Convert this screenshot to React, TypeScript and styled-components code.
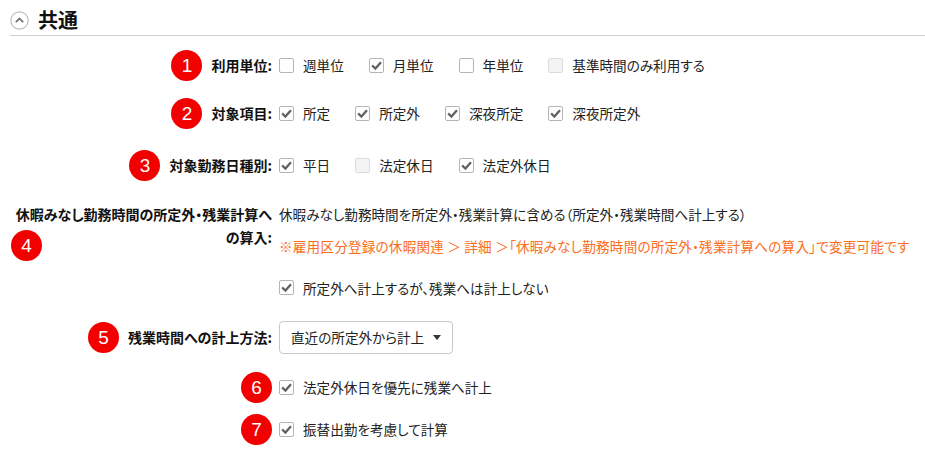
import React from 'react';
import styled, { createGlobalStyle } from 'styled-components';

const GlobalStyle = createGlobalStyle`
  html, body {
    margin: 0;
    padding: 0;
    background: #fff;
  }
  body {
    font-family: "Noto Sans CJK JP", "Noto Sans", sans-serif;
    font-size: 13.6px;
    font-feature-settings: "palt";
    color: #222;
  }
`;

type Opt = { label: string; checked?: boolean; disabled?: boolean };

const units: Opt[] = [
  { label: '週単位' },
  { label: '月単位', checked: true },
  { label: '年単位' },
  { label: '基準時間のみ利用する', disabled: true },
];

const targets: Opt[] = [
  { label: '所定', checked: true },
  { label: '所定外', checked: true },
  { label: '深夜所定', checked: true },
  { label: '深夜所定外', checked: true },
];

const dayKinds: Opt[] = [
  { label: '平日', checked: true },
  { label: '法定休日', disabled: true },
  { label: '法定外休日', checked: true },
];

const CheckBox: React.FC<{ checked?: boolean; disabled?: boolean }> = ({ checked, disabled }) => (
  <Box $disabled={disabled}>
    {checked && (
      <svg width="13" height="13" viewBox="0 0 13 13">
        <path d="M3 7.2 L5.4 9.6 L10.2 4.2" fill="none" stroke="#616161" strokeWidth="2.3" strokeLinecap="square" />
      </svg>
    )}
  </Box>
);

const Check: React.FC<Opt> = ({ label, checked, disabled }) => (
  <CheckItem>
    <CheckBox checked={checked} disabled={disabled} />
    <span>{label}</span>
  </CheckItem>
);

const CheckGroup: React.FC<{ items: Opt[] }> = ({ items }) => (
  <Group>
    {items.map((o) => (
      <Check key={o.label} {...o} />
    ))}
  </Group>
);

export default function App() {
  return (
    <Page>
      <GlobalStyle />
      <Header>
        <svg width="19" height="19" viewBox="0 0 19 19">
          <circle cx="9.5" cy="9.5" r="8.7" fill="#fff" stroke="#bdbdbd" strokeWidth="1.2" />
          <path d="M5.8 11.2 L9.5 7.5 L13.2 11.2" fill="none" stroke="#777" strokeWidth="1.8" />
        </svg>
        <Title>共通</Title>
      </Header>

      <Form>
        <Row $pt={12.5}>
          <Label>
            <Badge>1</Badge>
            <LabelText>利用単位:</LabelText>
          </Label>
          <CheckGroup items={units} />
        </Row>

        <Row $pt={15}>
          <Label>
            <Badge>2</Badge>
            <LabelText>対象項目:</LabelText>
          </Label>
          <CheckGroup items={targets} />
        </Row>

        <Row $pt={19}>
          <Label>
            <Badge>3</Badge>
            <LabelText>対象勤務日種別:</LabelText>
          </Label>
          <CheckGroup items={dayKinds} />
        </Row>

        <Row $pt={21} $top>
          <Label $wrap>
            <FloatBadge>4</FloatBadge>
            <LabelText>休暇みなし勤務時間の所定外・残業計算への算入:</LabelText>
          </Label>
          <Value>
            <Line>休暇みなし勤務時間を所定外・残業計算に含める（所定外・残業時間へ計上する）</Line>
            <Note>※雇用区分登録の休暇関連 ＞ 詳細 ＞「休暇みなし勤務時間の所定外・残業計算への算入」で変更可能です</Note>
            <SubCheck>
              <Check label="所定外へ計上するが、残業へは計上しない" checked />
            </SubCheck>
          </Value>
        </Row>

        <Row $pt={22.5}>
          <Label>
            <Badge>5</Badge>
            <LabelText>残業時間への計上方法:</LabelText>
          </Label>
          <Select>
            <span>直近の所定外から計上</span>
            <Caret />
          </Select>
        </Row>

        <Row $pt={17}>
          <Label>
            <Badge>6</Badge>
          </Label>
          <Check label="法定外休日を優先に残業へ計上" checked />
        </Row>

        <Row $pt={9}>
          <Label>
            <Badge>7</Badge>
          </Label>
          <Check label="振替出勤を考慮して計算" checked />
        </Row>
      </Form>
    </Page>
  );
}

const Page = styled.div`
  width: 925px;
  padding-left: 10px;
  box-sizing: border-box;
`;

const Header = styled.div`
  display: flex;
  align-items: center;
  gap: 9px;
  height: 30px;
  padding-top: 5px;
  border-bottom: 1px solid #cfcfcf;
`;

const Title = styled.h2`
  margin: 0;
  font-size: 20px;
  font-weight: 700;
  color: #111;
  line-height: 24px;
`;

const Form = styled.div`
  display: flex;
  flex-direction: column;
  margin-left: -10px;
`;

const Row = styled.div<{ $pt: number; $top?: boolean }>`
  display: grid;
  grid-template-columns: 272px 1fr;
  column-gap: 7px;
  align-items: ${(p) => (p.$top ? 'start' : 'center')};
  padding-top: ${(p) => p.$pt}px;
  min-height: 33px;
`;

const Label = styled.div<{ $wrap?: boolean }>`
  position: relative;
  display: flex;
  align-items: center;
  justify-content: flex-end;
  gap: 9px;
  padding-left: ${(p) => (p.$wrap ? '14px' : '0')};
  text-align: right;
`;

const LabelText = styled.span`
  font-size: 14px;
  font-weight: 700;
  color: #111;
  line-height: 23px;
`;

const Badge = styled.span`
  display: inline-flex;
  align-items: center;
  justify-content: center;
  flex: none;
  width: 31px;
  height: 31px;
  border-radius: 50%;
  background: #f20000;
  color: #fff;
  font-family: "Liberation Sans", Arial, sans-serif;
  font-size: 19px;
  line-height: 1;
`;

const FloatBadge = styled(Badge)`
  position: absolute;
  left: 11px;
  top: 27px;
`;

const Group = styled.div`
  display: flex;
  align-items: center;
  gap: 25px;
`;

const CheckItem = styled.label`
  display: inline-flex;
  align-items: center;
  gap: 9px;
  line-height: 20px;
  white-space: nowrap;
`;

const Box = styled.span<{ $disabled?: boolean }>`
  display: inline-flex;
  align-items: center;
  justify-content: center;
  box-sizing: border-box;
  width: 15px;
  height: 15px;
  border: 1px solid ${(p) => (p.$disabled ? '#dcdcdc' : '#b5b5b5')};
  border-radius: 2px;
  background: ${(p) => (p.$disabled ? '#f3f3f3' : '#fff')};
`;

const Value = styled.div`
  display: flex;
  flex-direction: column;
  align-items: flex-start;
`;

const Line = styled.div`
  line-height: 23px;
`;

const Note = styled.div`
  margin-top: 9px;
  line-height: 23px;
  letter-spacing: 0.2px;
  color: #fa6e1c;
  white-space: nowrap;
`;

const SubCheck = styled.div`
  margin-top: 20px;
`;

const Select = styled.div`
  display: flex;
  align-items: center;
  justify-content: space-between;
  box-sizing: border-box;
  width: 174px;
  height: 33px;
  padding: 0 11px 0 11px;
  border: 1px solid #c8c8c8;
  border-radius: 4px;
  background: #fff;
`;

const Caret = styled.span`
  width: 0;
  height: 0;
  border-left: 4px solid transparent;
  border-right: 4px solid transparent;
  border-top: 5px solid #333;
`;
